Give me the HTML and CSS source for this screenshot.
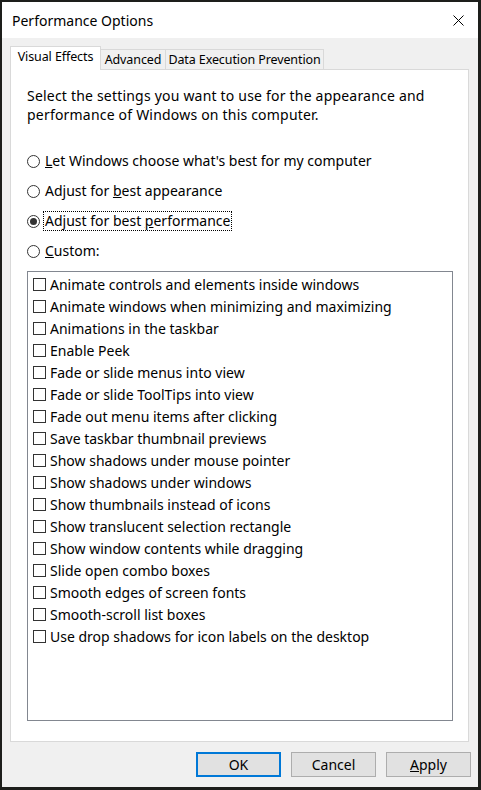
FILE: index.html
```html
<!DOCTYPE html>
<html lang="en">
<head>
<meta charset="utf-8">
<title>Performance Options</title>
<link rel="stylesheet" href="styles.css">
</head>
<body>
<div class="window">
  <div class="titlebar">
    <span class="title">Performance Options</span>
    <span class="close">
      <svg width="11" height="11" viewBox="0 0 11 11"><path d="M0.5 0.5 L10.5 10.5 M10.5 0.5 L0.5 10.5" stroke="#000" stroke-width="1" fill="none"/></svg>
    </span>
  </div>
  <div class="content">
    <div class="tabs">
      <div class="tab active tab-ve">Visual Effects</div>
      <div class="tab tab-adv">Advanced</div>
      <div class="tab tab-dep">Data Execution Prevention</div>
    </div>
    <div class="panel">
      <p class="desc">Select the settings you want to use for the appearance and performance of Windows on this computer.</p>
      <div class="radios">
        <div class="radio-row"><span class="radio"></span><span class="rlabel"><u>L</u>et Windows choose what's best for my computer</span></div>
        <div class="radio-row"><span class="radio"></span><span class="rlabel">Adjust for <u>b</u>est appearance</span></div>
        <div class="radio-row"><span class="radio checked"></span><span class="rlabel focus">Adjust for best <u>p</u>erformance</span></div>
        <div class="radio-row"><span class="radio"></span><span class="rlabel"><u>C</u>ustom:</span></div>
      </div>
      <div class="listbox">
        <div class="check-row"><span class="check"></span><span>Animate controls and elements inside windows</span></div>
        <div class="check-row"><span class="check"></span><span>Animate windows when minimizing and maximizing</span></div>
        <div class="check-row"><span class="check"></span><span>Animations in the taskbar</span></div>
        <div class="check-row"><span class="check"></span><span>Enable Peek</span></div>
        <div class="check-row"><span class="check"></span><span>Fade or slide menus into view</span></div>
        <div class="check-row"><span class="check"></span><span>Fade or slide ToolTips into view</span></div>
        <div class="check-row"><span class="check"></span><span>Fade out menu items after clicking</span></div>
        <div class="check-row"><span class="check"></span><span>Save taskbar thumbnail previews</span></div>
        <div class="check-row"><span class="check"></span><span>Show shadows under mouse pointer</span></div>
        <div class="check-row"><span class="check"></span><span>Show shadows under windows</span></div>
        <div class="check-row"><span class="check"></span><span>Show thumbnails instead of icons</span></div>
        <div class="check-row"><span class="check"></span><span>Show translucent selection rectangle</span></div>
        <div class="check-row"><span class="check"></span><span>Show window contents while dragging</span></div>
        <div class="check-row"><span class="check"></span><span>Slide open combo boxes</span></div>
        <div class="check-row"><span class="check"></span><span>Smooth edges of screen fonts</span></div>
        <div class="check-row"><span class="check"></span><span>Smooth-scroll list boxes</span></div>
        <div class="check-row"><span class="check"></span><span>Use drop shadows for icon labels on the desktop</span></div>
      </div>
    </div>
  </div>
  <div class="buttons">
    <button class="btn default">OK</button>
    <button class="btn">Cancel</button>
    <button class="btn"><u>A</u>pply</button>
  </div>
</div>
</body>
</html>
```
FILE: styles.css
```css
html, body {
  margin: 0;
  padding: 0;
}
body {
  background: #1d1e1b;
  width: 481px;
  height: 790px;
  overflow: hidden;
  font-family: "Noto Sans", "Open Sans", sans-serif;
  font-size: 14px;
  color: #000;
}
.window {
  margin: 2px 3px 3px 2px;
  width: 476px;
  height: 785px;
  background: #f0f0f0;
  display: flex;
  flex-direction: column;
}
.titlebar {
  height: 36px;
  background: #fff;
  display: flex;
  align-items: center;
  padding-left: 10px;
}
.title {
  font-size: 14px;
  flex: 1;
}
.close {
  width: 40px;
  display: flex;
  justify-content: center;
  align-items: center;
}
.close svg {
  display: block;
}
.content {
  padding: 8px 9px 0 8px;
}
.tabs {
  display: flex;
  align-items: flex-end;
  height: 23px;
}
.tab {
  box-sizing: border-box;
  height: 20px;
  border: 1px solid #d9d9d9;
  border-bottom: none;
  background: #f0f0f0;
  font-size: 12.5px;
  letter-spacing: -0.1px;
  text-align: center;
  line-height: 19px;
  margin-left: -1px;
}
.tab.active {
  height: 24px;
  margin-bottom: -1px;
  background: #fff;
  position: relative;
  z-index: 1;
  line-height: 20px;
  margin-left: 0;
}
.tab-ve {
  width: 91px;
}
.tab-adv {
  width: 66px;
}
.tab-dep {
  width: 159px;
}
.panel {
  box-sizing: border-box;
  height: 673px;
  background: #fff;
  border: 1px solid #d9d9d9;
  padding: 16px 15px 0 16px;
}
.desc {
  margin: 0;
  line-height: 19px;
  width: 425px;
  letter-spacing: 0.2px;
}
.radios {
  margin-top: 22px;
}
.radio-row {
  height: 30px;
  display: flex;
  align-items: center;
}
.radio {
  box-sizing: border-box;
  width: 13px;
  height: 13px;
  border: 1px solid #333;
  border-radius: 50%;
  margin-right: 3px;
  display: flex;
  align-items: center;
  justify-content: center;
}
.radio.checked::after {
  content: "";
  width: 7px;
  height: 7px;
  border-radius: 50%;
  background: #333;
}
.rlabel {
  padding: 0 1px;
  line-height: 18px;
  border: 1px dotted transparent;
}
.rlabel.focus {
  border-color: #000;
}
.listbox {
  box-sizing: border-box;
  margin-top: 5px;
  width: 426px;
  height: 450px;
  border: 1px solid #828790;
  padding: 1px 0 0 5px;
}
.check-row {
  height: 22px;
  display: flex;
  align-items: center;
}
.check {
  box-sizing: border-box;
  width: 13px;
  height: 13px;
  border: 1px solid #333;
  margin-right: 4px;
  flex: none;
}
.buttons {
  display: flex;
  justify-content: flex-end;
  gap: 10px;
  padding-right: 7px;
  margin-top: 10px;
}
.btn {
  box-sizing: border-box;
  width: 85px;
  height: 25px;
  background: #e1e1e1;
  border: 1px solid #adadad;
  font-family: inherit;
  font-size: 14px;
  color: #000;
  padding: 0;
  margin: 0;
}
.btn.default {
  border: 2px solid #0078d7;
}
```
